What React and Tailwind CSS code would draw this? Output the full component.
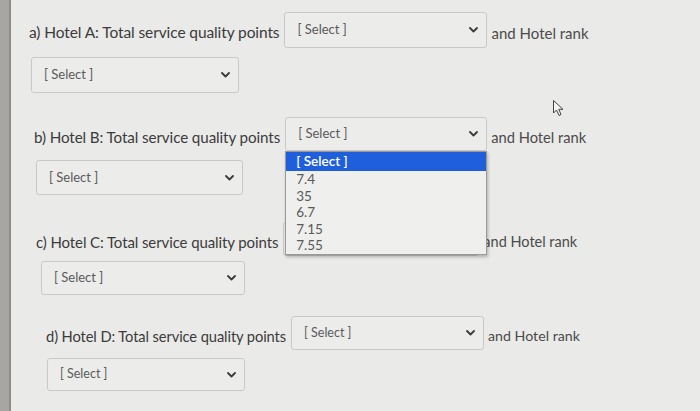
import React from 'react'

const Chevron = () => (
  <svg width="9" height="6" viewBox="0 0 9 6" className="shrink-0">
    <polyline points="1,1 4.5,4.5 8,1" fill="none" stroke="#3a3a3a" strokeWidth="1.8" strokeLinecap="round" strokeLinejoin="round" />
  </svg>
)

const SelectBox = ({ small, hidden, className = '' }) => (
  <div className={`flex items-center justify-between rounded-[3px] border border-[#c9c9c7] bg-[#ececea] pl-3 pr-2 ${className}`}>
    {!hidden && <span className={`${small ? 'text-[12.5px]' : 'text-[13px]'} text-[#5a5a5a]`}>[ Select ]</span>}
    {!hidden && <Chevron />}
  </div>
)

const Row = ({ label, className, textClass, rankClass, children }) => (
  <div className={`flex items-center ${className}`}>
    <span className={`mt-[6px] tracking-[-0.1px] text-[#3b3b3b] whitespace-nowrap ${textClass}`}>{label}</span>
    <div className="ml-[5px] relative">{children}</div>
    <span className={`ml-[4px] mt-[6px] text-[#4a4a4a] whitespace-nowrap ${rankClass}`}>and Hotel rank</span>
  </div>
)

const options = ['7.4', '35', '6.7', '7.15', '7.55']

export default function App() {
  return (
    <div className="w-[700px] h-[411px] overflow-hidden flex bg-[#eaeae8] font-['Lato','Open_Sans',sans-serif]">
      <div className="w-[11px] shrink-0 bg-[#a7a6a2] border-r-[2px] border-[#8d8c88]" />
      <div className="relative flex-1 flex flex-col">
        {/* a */}
        <Row label="a) Hotel A: Total service quality points" className="pl-[18px] mt-[12px]" textClass="text-[15.5px]" rankClass="text-[15px]">
          <SelectBox className="w-[203px] h-[36px]" />
        </Row>
        <div className="pl-[20px] mt-[9px]">
          <SelectBox className="w-[208px] h-[36px]" />
        </div>

        {/* b */}
        <Row label="b) Hotel B: Total service quality points" className="pl-[23px] mt-[24px]" textClass="text-[15.2px]" rankClass="text-[14.7px]">
          <SelectBox className="w-[202px] h-[34px]" />
          <div className="absolute left-0 top-[34px] z-10 w-[202px] border border-[#9a9a98] bg-[#efefed] shadow-[1px_2px_3px_rgba(0,0,0,0.25)]">
            <div className="h-[19px] flex items-center bg-[#1f5fdc] pl-[10px] text-[13.5px] font-semibold text-white">[ Select ]</div>
            {options.map((o) => (
              <div key={o} className="h-[16.5px] flex items-center pl-[10px] text-[13.5px] text-[#5a5a5a]">{o}</div>
            ))}
          </div>
        </Row>
        <div className="pl-[25px] mt-[9px]">
          <SelectBox className="w-[207px] h-[35px]" />
        </div>

        {/* c */}
        <Row label="c) Hotel C: Total service quality points" className="pl-[25px] mt-[27px]" textClass="text-[15px]" rankClass="text-[14.5px]">
          <SelectBox className="w-[196px] h-[34px]" hidden />
        </Row>
        <div className="pl-[30px] mt-[5px]">
          <SelectBox className="w-[204px] h-[34px]" />
        </div>

        {/* d */}
        <Row label="d) Hotel D: Total service quality points" className="pl-[35px] mt-[21px]" textClass="text-[14.7px]" rankClass="text-[14.2px]">
          <SelectBox className="w-[193px] h-[34px]" small />
        </Row>
        <div className="pl-[36px] mt-[8px]">
          <SelectBox className="w-[198px] h-[33px]" small />
        </div>

        {/* cursor */}
        <svg className="absolute left-[541px] top-[99px]" width="14" height="18" viewBox="0 0 14 18">
          <path d="M1.5 1.5 L1.5 14 L4.5 11 L7 16.5 L9 15.5 L6.8 10.3 L11 10.3 Z" fill="#f4f4f2" stroke="#444" strokeWidth="1" strokeLinejoin="round" />
        </svg>
      </div>
    </div>
  )
}
